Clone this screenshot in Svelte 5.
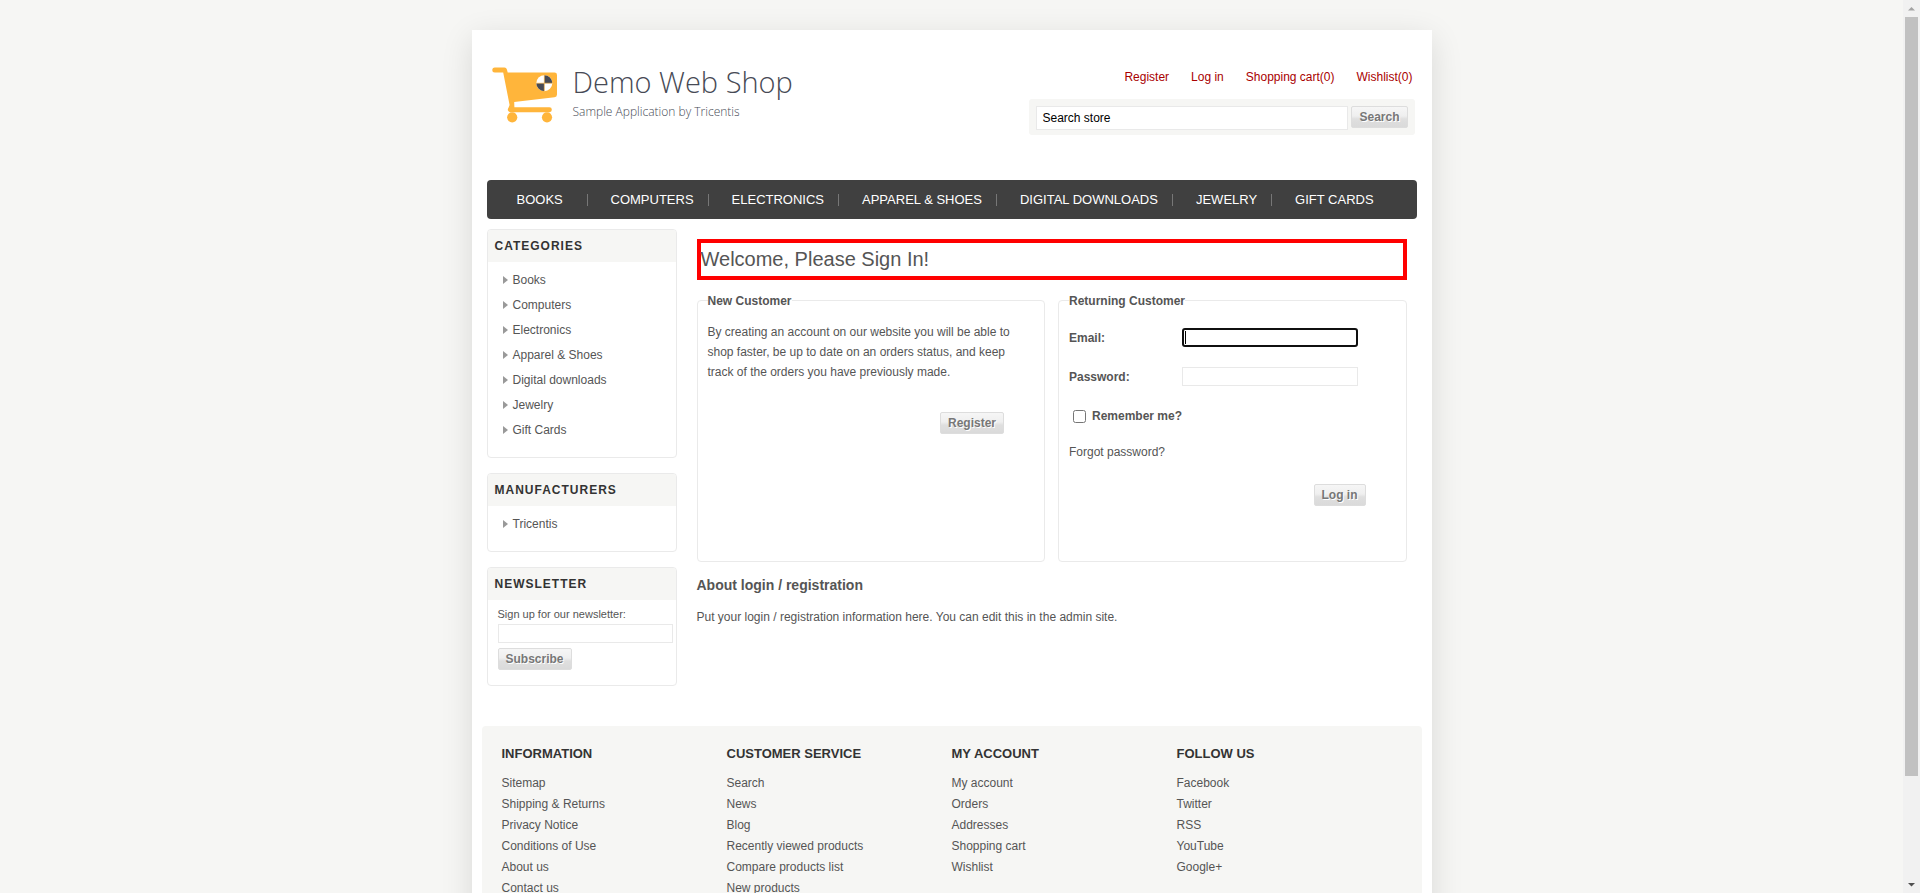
<script>
  const account = ['Register', 'Log in', 'Shopping cart(0)', 'Wishlist(0)'];
  const menu = ['Books', 'Computers', 'Electronics', 'Apparel & Shoes', 'Digital downloads', 'Jewelry', 'Gift Cards'];
  const blocks = [
    { title: 'Categories', items: menu },
    { title: 'Manufacturers', items: ['Tricentis'] }
  ];
  const footer = [
    { title: 'Information', items: ['Sitemap', 'Shipping & Returns', 'Privacy Notice', 'Conditions of Use', 'About us', 'Contact us'] },
    { title: 'Customer service', items: ['Search', 'News', 'Blog', 'Recently viewed products', 'Compare products list', 'New products'] },
    { title: 'My account', items: ['My account', 'Orders', 'Addresses', 'Shopping cart', 'Wishlist'] },
    { title: 'Follow us', items: ['Facebook', 'Twitter', 'RSS', 'YouTube', 'Google+'] }
  ];
  let query = $state('Search store');
</script>

<div class="viewport">
  <div class="page">
    <div class="wrapper">
      <header class="header">
        <a class="logo" href="#home">
          <svg width="66" height="56" viewBox="0 0 66 56" aria-hidden="true">
            <g fill="#ffb53b">
              <path d="M2.8 .6H12.4Q14.4 .6 14.9 2.6L15.7 5.6H62.5Q65 5.6 65 8V27.6Q65 30 62.5 30.3L22.2 35L22.4 40.3H57.4A2.4 2.4 0 0 1 57.4 45.2H18A2.6 2.6 0 0 1 16.4 41L17.6 38L11.2 5.6H2.8A2.5 2.5 0 0 1 2.8 .6Z" />
              <circle cx="20.2" cy="50.3" r="5.1" />
              <circle cx="55" cy="50.3" r="5.1" />
            </g>
            <circle cx="52.3" cy="16.2" r="8" fill="#fff" />
            <path d="M52.3 16.2V8.2A8 8 0 0 1 60.3 16.2ZM52.3 16.2V24.2A8 8 0 0 1 44.3 16.2Z" fill="#474a55" />
            <path d="M52.3 8.2V24.2M44.3 16.2H60.3" stroke="#ffb53b" stroke-width=".6" />
          </svg>
          <span class="logo-text">
            <span class="name">Demo Web Shop</span>
            <span class="tagline">Sample Application by Tricentis</span>
          </span>
        </a>
        <div class="header-side">
          <ul class="account">
            {#each account as item}<li><a href="#account">{item}</a></li>{/each}
          </ul>
          <form class="search" onsubmit={(e) => e.preventDefault()}>
            <input type="text" aria-label="Search store" bind:value={query} />
            <button type="submit">Search</button>
          </form>
        </div>
      </header>

      <nav class="menu">
        <ul>
          {#each menu as item}<li><a href="#menu">{item}</a></li>{/each}
        </ul>
      </nav>

      <div class="columns">
        <aside class="side">
          {#each blocks as block}
            <section class="block">
              <h2>{block.title}</h2>
              <ul>
                {#each block.items as item}<li><a href="#list">{item}</a></li>{/each}
              </ul>
            </section>
          {/each}
          <section class="block">
            <h2>Newsletter</h2>
            <form class="newsletter" onsubmit={(e) => e.preventDefault()}>
              <label for="newsletter-email">Sign up for our newsletter:</label>
              <input id="newsletter-email" type="text" />
              <button type="submit">Subscribe</button>
            </form>
          </section>
        </aside>

        <main class="main">
          <h1>Welcome, Please Sign In!</h1>
          <div class="customers">
            <section class="panel">
              <h3>New Customer</h3>
              <p>By creating an account on our website you will be able to shop faster, be up to date on an orders status, and keep track of the orders you have previously made.</p>
              <div class="register"><button type="button">Register</button></div>
            </section>
            <section class="panel">
              <h3>Returning Customer</h3>
              <form class="login" onsubmit={(e) => e.preventDefault()}>
                <div class="row">
                  <label for="email">Email:</label>
                  <input id="email" class="active" type="text" />
                </div>
                <div class="row">
                  <label for="password">Password:</label>
                  <input id="password" type="password" />
                </div>
                <div class="remember">
                  <input id="remember" type="checkbox" />
                  <label for="remember">Remember me?</label>
                </div>
                <a class="forgot" href="#recover">Forgot password?</a>
                <div class="submit"><button type="submit">Log in</button></div>
              </form>
            </section>
          </div>
          <h2>About login / registration</h2>
          <p class="about">Put your login / registration information here. You can edit this in the admin site.</p>
        </main>
      </div>

      <footer class="footer">
        {#each footer as col}
          <section>
            <h3>{col.title}</h3>
            <ul>
              {#each col.items as item}<li><a href="#footer">{item}</a></li>{/each}
            </ul>
          </section>
        {/each}
      </footer>
    </div>
  </div>

  <div class="scrollbar" aria-hidden="true">
    <svg width="17" height="17" viewBox="0 0 17 17"><path d="M5 10.5L8.5 7L12 10.5Z" fill="#a3a3a3" /></svg>
    <div class="track"><div class="thumb"></div></div>
    <svg width="17" height="17" viewBox="0 0 17 17"><path d="M5 7L8.5 10.5L12 7Z" fill="#505050" /></svg>
  </div>
</div>

<style>
  :global(body) { background: #f6f6f4; }
  .viewport {
    display: grid;
    grid-template-columns: minmax(0, 1fr) 17px;
    height: 100vh;
    overflow: hidden;
    font: 12px/14px "Liberation Sans", Arial, sans-serif;
    color: #555;
  }
  .viewport :is(ul, h1, h2, h3, p) { margin: 0; padding: 0; }
  ul { list-style: none; }
  a { color: inherit; text-decoration: none; }
  .page { overflow: hidden; padding: 30px 0; }
  .wrapper {
    box-sizing: border-box;
    max-width: 960px;
    margin: 0 auto;
    padding: 0 10px 30px;
    background: #fff;
    box-shadow: 0 8px 30px rgba(0, 0, 0, 0.12);
  }
  input:not([type="checkbox"]) {
    box-sizing: border-box;
    height: 19px;
    margin: 0;
    padding: 0 5px;
    border: 1px solid #e9e9e9;
    background: #fff;
    font: inherit;
    color: #000;
  }
  button {
    height: 22px;
    padding: 0 7px;
    border: 1px solid #ddd;
    border-radius: 2px;
    background: linear-gradient(#f6f6f6 0%, #efefef 45%, #dfdfdf 60%, #dadada 100%);
    font: bold 12px/20px "Liberation Sans", Arial, sans-serif;
    color: #777;
    text-shadow: 1px 1px 0 #fff;
  }

  .header {
    display: flex;
    justify-content: space-between;
    min-height: 150px;
    padding: 0 7px 0 10px;
  }
  .logo { display: flex; align-items: flex-start; gap: 15px; padding-top: 37px; height: 60px; }
  .logo-text {
    display: flex;
    flex-direction: column;
    gap: 4px;
    margin-top: -3px;
    font-family: "Open Sans", sans-serif;
    font-weight: 300;
    color: #474a55;
  }
  .name { font-size: 29px; line-height: 36px; }
  .tagline { font-size: 12px; line-height: 16px; }
  .header-side { display: flex; flex-direction: column; align-items: flex-end; gap: 15px; padding-top: 40px; }
  .account { display: flex; gap: 22px; color: #a90000; }
  .viewport .account { padding-right: 2px; }
  .search {
    display: flex;
    gap: 3px;
    padding: 7px 7px 5px;
    border-radius: 3px;
    background: #f6f6f4;
  }
  .search input:not([type="checkbox"]) { width: 312px; height: 24px; padding: 0 5px; }

  .menu { margin: 0 5px; border-radius: 4px; background: #404040; }
  .viewport .menu ul { display: flex; padding-left: 7px; }
  .menu li {
    box-sizing: border-box;
    display: flex;
    align-items: center;
    justify-content: space-between;
    gap: 14px;
    min-width: 94px;
    height: 39px;
    padding-left: 23px;
    font-size: 13px;
    line-height: 15px;
    color: #fff;
    text-transform: uppercase;
  }
  .menu li:not(:last-child)::after { content: ""; width: 1px; height: 12px; background: #777; }

  .columns { display: grid; grid-template-columns: 190px minmax(0, 1fr); gap: 20px; margin: 10px 5px 40px; }
  .side { display: flex; flex-direction: column; gap: 15px; }
  .block { border: 1px solid #eaeaea; border-radius: 4px; overflow: hidden; }
  .block h2 {
    background: #f6f6f4;
    font-size: 12px;
    line-height: 32px;
    letter-spacing: 1px;
    color: #333;
    text-transform: uppercase;
  }
  .viewport .block h2 { padding: 0 7px; }
  .viewport .block ul { padding: 5px 15px 15px; }
  .block li { display: flex; align-items: center; gap: 5px; height: 25px; }
  .block li::before {
    content: "";
    border: 4px solid transparent;
    border-left: 5px solid #999;
    border-right-width: 0;
  }
  .newsletter { display: flex; flex-direction: column; align-items: flex-start; padding: 7px 3px 15px 10px; }
  .newsletter label { margin-bottom: 3px; font-size: 11px; }
  .newsletter input:not([type="checkbox"]) { width: 100%; margin-bottom: 5px; }

  .main { padding: 10px 10px 0 0; }
  h1 { border: 4px solid #f00; font-size: 20px; font-weight: normal; line-height: 33px; }
  .customers { display: grid; grid-template-columns: 1fr 1fr; gap: 13px; margin-top: 20px; }
  .panel { min-height: 260px; border: 1px solid #eaeaea; border-radius: 4px; padding: 0 10px; }
  .panel h3 { width: fit-content; background: #fff; font-size: 12px; line-height: 14px; }
  .viewport .panel h3 { margin-top: -7px; }
  .viewport .panel p { margin-top: 14px; padding-right: 15px; line-height: 20px; }
  .register { display: flex; justify-content: flex-end; margin: 30px 30px 0 0; }
  .login { display: flex; flex-direction: column; align-items: stretch; padding-top: 20px; }
  .row { display: flex; align-items: center; height: 19px; margin-bottom: 20px; font-weight: bold; }
  .row label { width: 113px; }
  .row input:not([type="checkbox"]) { width: 176px; }
  .row .active:not([type="checkbox"]) {
    border: 2px solid #101010;
    border-radius: 3px;
    background: linear-gradient(#000, #000) 1px 1px / 1px 13px no-repeat #fff;
  }
  .remember { display: flex; align-items: center; gap: 6px; height: 20px; font-weight: bold; }
  .remember input { width: 13px; height: 13px; margin: 0 0 0 4px; }
  .forgot { margin-top: 19px; }
  .submit { display: flex; justify-content: flex-end; margin: 25px 30px 0 0; }
  .main h2 { font-size: 14px; line-height: 16px; }
  .viewport .main h2 { margin-top: 15px; }
  .viewport .about { margin-top: 17px; }

  .footer {
    display: grid;
    grid-template-columns: repeat(4, 225px);
    min-height: 220px;
    padding: 20px;
    box-sizing: border-box;
    border-radius: 4px;
    background: #f6f6f4;
  }
  .footer h3 { font-size: 13px; line-height: 16px; color: #333; text-transform: uppercase; }
  .footer ul { line-height: 21px; }
  .viewport .footer ul { margin-top: 11px; }

  .scrollbar { display: flex; flex-direction: column; background: #f1f1f1; }
  .track { flex: 1; padding: 0 2px; }
  .thumb { height: 88.4%; background: #c1c1c1; }
</style>
